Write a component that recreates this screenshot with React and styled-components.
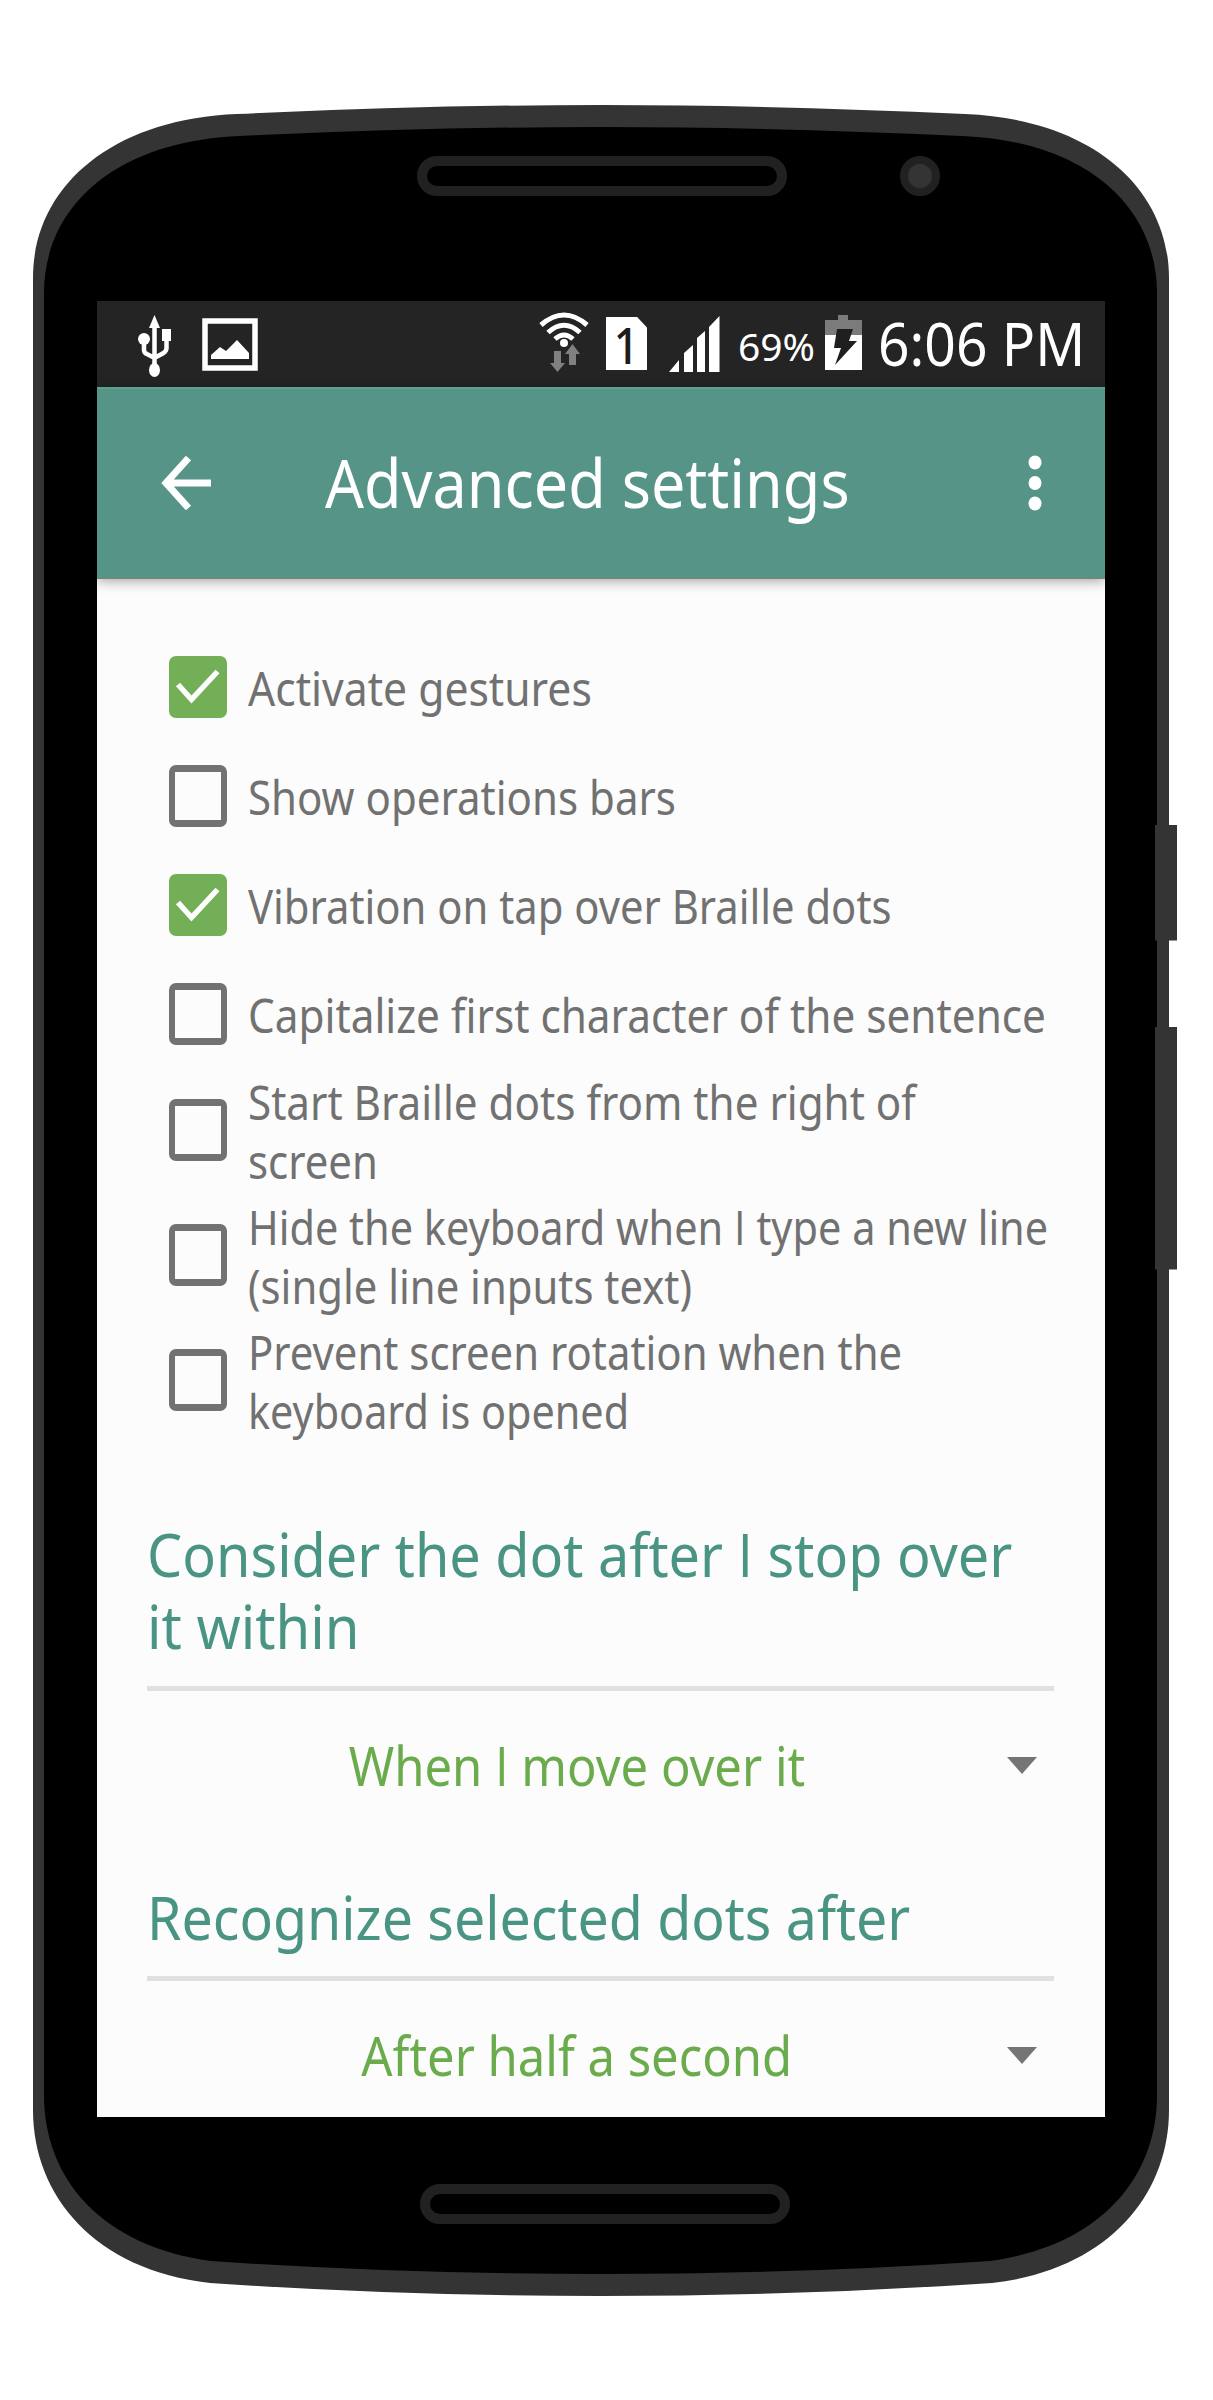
import React from "react";
import styled, { createGlobalStyle } from "styled-components";

const GlobalStyle = createGlobalStyle`
  *, *::before, *::after { box-sizing: border-box; }
  body { margin: 0; background: #fff; }
`;

const Phone = styled.main`
  position: relative;
  display: flex;
  flex-direction: column;
  width: 1213px;
  height: 2400px;
  overflow: hidden;
  font-family: "Noto Sans", "Open Sans", sans-serif;
`;

const Shell = styled.svg`
  position: absolute;
  inset: 0;
  width: 1213px;
  height: 2400px;
`;

const TopBezel = styled.header`
  position: relative;
  display: flex;
  gap: 113px;
  height: 301px;
  padding: 156px 0 0 417px;
`;

const Slot = styled.div`
  width: 370px;
  height: 40px;
  border: 10px solid #212121;
  border-radius: 20px;
  background: #000;
`;

const Camera = styled.div`
  width: 40px;
  height: 40px;
  border: 8px solid #212121;
  border-radius: 50%;
  background: #343434;
`;

const BottomBezel = styled.footer`
  position: relative;
  padding: 67px 0 0 420px;
`;

const Screen = styled.section`
  position: relative;
  flex: none;
  display: flex;
  flex-direction: column;
  width: 1008px;
  height: 1816px;
  margin-left: 97px;
  overflow: hidden;
  background: #fcfcfc;
`;

const StatusBar = styled.div`
  flex: none;
  display: flex;
  align-items: flex-start;
  height: 86px;
  padding-left: 38px;
  background: #242424;
`;

const StatusIcon = styled.svg`
  flex: none;
  display: block;
  margin-left: ${(p) => p.$gap || 0}px;
  margin-top: ${(p) => p.$top}px;
`;

const Condensed = styled.span`
  display: block;
  white-space: nowrap;
  transform: scaleX(${(p) => p.$ratio});
  transform-origin: ${(p) => p.$origin || "left"} center;
`;

const StatusText = styled.div`
  flex: none;
  width: ${(p) => p.$width}px;
  margin-left: ${(p) => p.$gap}px;
  margin-top: ${(p) => p.$top}px;
  color: #fff;
  font-size: ${(p) => p.$size}px;
  line-height: 60px;
`;

const SimCard = styled.div`
  flex: none;
  display: flex;
  justify-content: center;
  width: 41px;
  height: 53px;
  margin: 16px 0 0 17px;
  background: #fff;
  clip-path: polygon(0 0, 76% 0, 100% 20%, 100% 100%, 0 100%);
  color: #1c1c1c;
  font-family: "Noto Sans", sans-serif;
  font-size: 50px;
  font-weight: 500;
  line-height: 56px;
`;

const Toolbar = styled.div`
  position: relative;
  flex: none;
  display: flex;
  align-items: center;
  height: 192px;
  padding-left: 63px;
  background: #559486;
  border-top: 2px solid #5a9f90;
  border-bottom: 1px solid #857c7b;
  box-shadow: 0 2px 12px rgba(0, 0, 0, 0.36);
`;

const IconButton = styled.button`
  display: flex;
  flex: none;
  padding: 0 0 1px;
  border: 0;
  background: none;
`;

const Title = styled.h1`
  flex: none;
  width: 522px;
  margin: 0 181px 0 113px;
  padding-bottom: 3px;
  color: #fff;
  font-size: 67px;
  font-weight: 400;
  line-height: 92px;
`;

const Options = styled.ul`
  flex: none;
  display: flex;
  flex-direction: column;
  margin: 0;
  padding: 53px 0 0 72px;
  list-style: none;
`;

const Option = styled.li`
  display: flex;
  align-items: center;
  gap: 21px;
  height: ${(p) => (p.$tall ? 125 : 109)}px;
  color: #717171;
  font-size: 47px;
  line-height: 59px;
`;

const Label = styled.div`
  padding-top: 3px;
`;

const Box = styled.span`
  flex: none;
  display: block;
  width: 58px;
  height: 62px;
  margin-bottom: ${(p) => (p.$raised ? 2 : 0)}px;
  border: solid ${(p) => (p.$checked ? "#73af57" : "#727272")};
  border-width: 7px 6.5px;
  border-radius: 7px;
  background: ${(p) => (p.$checked ? "#73af57" : "transparent")};
`;

const Tick = styled.svg`
  display: block;
  margin: -7px -6px;
`;

const Group = styled.section`
  flex: none;
  width: 907px;
  margin: ${(p) => p.$space}px 0 0 50px;
`;

const Heading = styled.h2`
  margin: 0;
  padding: 0 0 ${(p) => p.$rule}px 0;
  border-bottom: 5px solid #e0e0e0;
  color: #4a9484;
  font-size: 61px;
  font-weight: 400;
  line-height: 72px;
`;

const Select = styled.div`
  display: flex;
  align-items: center;
  height: 148px;
  padding-right: 17px;
  color: #6aab4c;
  font-size: 54px;
  line-height: 72px;
`;

const Value = styled.div`
  flex: 1;
  display: flex;
  justify-content: center;
`;

const Caret = styled.span`
  width: 0;
  height: 0;
  border: solid transparent;
  border-width: 17px 15px 0;
  border-top-color: #757575;
`;

const PlainI = styled.span`
  font-family: "Open Sans", sans-serif;
`;

function Text({ children, ratio, origin }) {
  const parts = children.split(/\bI\b/);
  return (
    <Condensed $ratio={ratio} $origin={origin}>
      {parts[0]}
      {parts.length > 1 && <PlainI>I</PlainI>}
      {parts[1]}
    </Condensed>
  );
}

const options = [
  { checked: true, lines: [["Activate gestures", 0.907]] },
  { checked: false, lines: [["Show operations bars", 0.894]] },
  { checked: true, lines: [["Vibration on tap over Braille dots", 0.889]] },
  { checked: false, lines: [["Capitalize first character of the sentence", 0.9]] },
  { checked: false, lines: [["Start Braille dots from the right of", 0.897], ["screen", 0.892]] },
  { checked: false, lines: [["Hide the keyboard when I type a new line", 0.882], ["(single line inputs text)", 0.89]] },
  { checked: false, lines: [["Prevent screen rotation when the", 0.891], ["keyboard is opened", 0.88]] },
];

const groups = [
  {
    space: 75,
    rule: 24,
    heading: [["Consider the dot after I stop over", 0.914], ["it within", 0.922]],
    value: ["When I move over it", 0.906],
  },
  {
    space: 42,
    rule: 23,
    heading: [["Recognize selected dots after", 0.909]],
    value: ["After half a second", 0.906],
  },
];

function PhoneShell() {
  return (
    <Shell viewBox="0 0 1213 2400" aria-hidden="true">
      <path
        fill="#343434"
        d="M33 278C33 188 110 119 237 114Q430 105 601 105Q772 105 965 114C1092 119 1169 188 1169 278V2110C1169 2195 1108 2270 992 2283Q800 2296 601 2296Q402 2296 210 2283C94 2270 33 2195 33 2110Z"
      />
      <path
        fill="#000"
        d="M44 293C44 208 114 141 240 136Q430 127 601 127Q772 127 962 136C1088 141 1157 208 1157 293V2095C1157 2178 1100 2246 990 2261Q800 2274 601 2274Q402 2274 211 2261C101 2246 44 2178 44 2095Z"
      />
      <path fill="#343434" d="M1155 825h22v115.500h-22zM1155 1027h22v242.500h-22z" />
    </Shell>
  );
}

function UsbIcon() {
  return (
    <StatusIcon $gap={2} $top={13} width="36" height="64" viewBox="0 0 36 64" fill="#fff">
      <path d="M17.500 1 23 14H12z" />
      <circle cx="7" cy="25" r="6" />
      <path d="M25 15h9v12h-9z" />
      <ellipse cx="17.500" cy="56" rx="5.500" ry="7" />
      <path d="M17.500 10v46M7 26v10q0 3 3 4l7.500 4 9-5q3-2 3-5v-8" fill="none" stroke="#fff" strokeWidth="4.500" />
    </StatusIcon>
  );
}

function PictureIcon() {
  return (
    <StatusIcon $gap={29} $top={17} width="56" height="53" viewBox="0 0 56 53">
      <path d="M3 3h50v47H3z" fill="none" stroke="#fff" strokeWidth="5.500" />
      <path d="M9 41v-4l9-8 6 4 11-11 12 13v6z" fill="#fff" />
    </StatusIcon>
  );
}

function WifiIcon() {
  return (
    <StatusIcon $gap={281} $top={10} width="50" height="62" viewBox="0 0 50 62">
      <g fill="none" stroke="#fff" strokeWidth="5">
        <path d="M2 14Q25-6 48 14M9 21.500Q25 7 41 21.500M16 28Q25 20 34 28" />
      </g>
      <circle cx="25" cy="32" r="4" fill="#fff" />
      <path fill="#808080" d="M15 40h7v12h4l-7.500 9-7.500-9h4zM30 54h7V43h4l-7.500-10L26 43h4z" />
    </StatusIcon>
  );
}

function SignalIcon() {
  return (
    <StatusIcon $gap={22} $top={15} width="51" height="56" viewBox="0 0 51 56" fill="#fff">
      <path d="M0 56 10 44v12zM15 56V37l9-8v27zM28 56V22l8-7v41zM40 56V11L50.500 0v56z" />
    </StatusIcon>
  );
}

function BatteryIcon() {
  return (
    <StatusIcon $gap={9} $top={14} width="37" height="55" viewBox="0 0 37 55">
      <path d="M0 19h37v36H0z" fill="#fff" />
      <path d="M0 5h13V0h10v5h14v15H0z" fill="#7b7b7b" />
      <path d="M12 14h16l-4 12h8L10 50l6-17H9z" fill="#1f1f1f" />
    </StatusIcon>
  );
}

export default function App() {
  return (
    <Phone>
      <GlobalStyle />
      <PhoneShell />
      <TopBezel>
        <Slot />
        <Camera />
      </TopBezel>
      <Screen>
        <StatusBar>
          <UsbIcon />
          <PictureIcon />
          <WifiIcon />
          <SimCard>
            <Condensed $ratio={0.88} $origin="center">1</Condensed>
          </SimCard>
          <SignalIcon />
          <StatusText $width={78} $gap={18} $top={15} $size={39}>
            <Condensed $ratio={1}>69%</Condensed>
          </StatusText>
          <BatteryIcon />
          <StatusText $width={210} $gap={16} $top={12} $size={60}>
            <Condensed $ratio={0.92}>6:06 PM</Condensed>
          </StatusText>
        </StatusBar>
        <Toolbar>
          <IconButton aria-label="Back">
            <svg width="52" height="56" viewBox="0 0 52 56" fill="none" stroke="#fff" strokeWidth="7">
              <path d="M28.500 3 6 28l22.500 25M5 28h46" />
            </svg>
          </IconButton>
          <Title>
            <Text ratio={0.911}>Advanced settings</Text>
          </Title>
          <IconButton aria-label="More options">
            <svg width="14" height="56" viewBox="0 0 14 56" fill="#fff">
              <ellipse cx="7" cy="7.500" rx="6.500" ry="7" />
              <ellipse cx="7" cy="28" rx="6.500" ry="7" />
              <ellipse cx="7" cy="48.500" rx="6.500" ry="7" />
            </svg>
          </IconButton>
        </Toolbar>
        <Options>
          {options.map((o) => (
            <Option key={o.lines[0][0]} $tall={o.lines.length > 1}>
              <Box $checked={o.checked} $raised={o.lines.length > 1}>
                {o.checked && (
                  <Tick width="57" height="62" viewBox="0 0 57 62" fill="none" stroke="#fff" strokeWidth="5.500">
                    <path d="M9 28.500 22.500 43.500 48.500 15.500" />
                  </Tick>
                )}
              </Box>
              <Label>
                {o.lines.map(([t, r]) => (
                  <Text key={t} ratio={r}>{t}</Text>
                ))}
              </Label>
            </Option>
          ))}
        </Options>
        {groups.map((g) => (
          <Group key={g.value[0]} $space={g.space}>
            <Heading $rule={g.rule}>
              {g.heading.map(([t, r]) => (
                <Text key={t} ratio={r}>{t}</Text>
              ))}
            </Heading>
            <Select>
              <Value>
                <Text ratio={g.value[1]} origin="center">{g.value[0]}</Text>
              </Value>
              <Caret />
            </Select>
          </Group>
        ))}
      </Screen>
      <BottomBezel>
        <Slot />
      </BottomBezel>
    </Phone>
  );
}
